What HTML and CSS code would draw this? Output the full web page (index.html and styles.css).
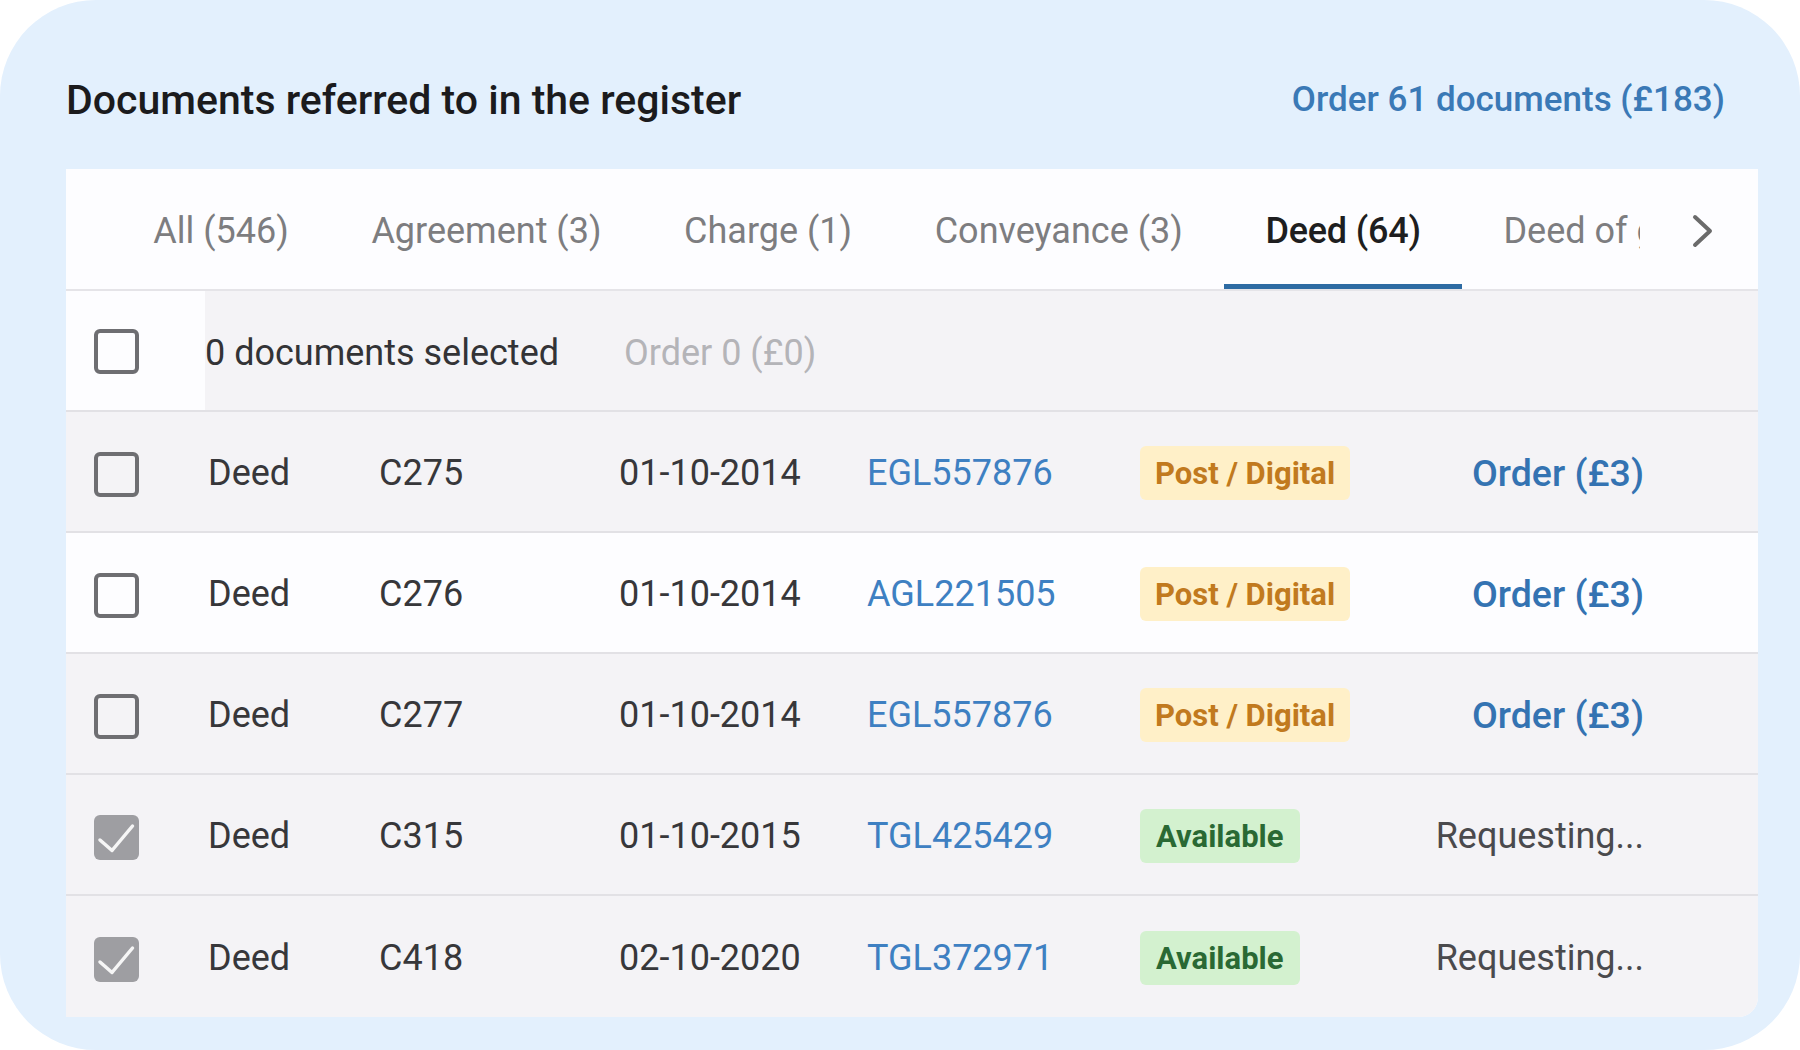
FILE: index.html
```html
<!DOCTYPE html>
<html lang="en">
<head>
  <meta charset="UTF-8" />
  <meta name="viewport" content="width=device-width, initial-scale=1.0"/>
  <title>Documents referred to in the register</title>
  <link rel="stylesheet" href="styles.css">
</head>
<body>

  <div class="panel">
    <div class="panel-header">
      <h1 class="panel-title">Documents referred to in the register</h1>
      <a class="order-all" href="#">Order 61 documents (£183)</a>
    </div>

    <div class="doc-card">
      <div class="tab-bar">
        <div class="tab-scroller">
          <div class="tab">All (546)</div>
          <div class="tab">Agreement (3)</div>
          <div class="tab">Charge (1)</div>
          <div class="tab">Conveyance (3)</div>
          <div class="tab tab-active">Deed (64)</div>
          <div class="tab">Deed of grant (2)</div>
          <div class="tab">Lease (12)</div>
        </div>
        <button class="tab-arrow" aria-label="Next tabs">
          <svg width="26" height="34" viewBox="0 0 26 34">
            <path d="M5 3 L20 17 L5 31" fill="none" stroke="#6b6b6b" stroke-width="4" stroke-linecap="round" stroke-linejoin="round"/>
          </svg>
        </button>
      </div>

      <div class="select-bar">
        <div class="check-cell"><span class="checkbox"></span></div>
        <span class="selected-count">0 documents selected</span>
        <span class="order-selected">Order 0 (£0)</span>
      </div>

      <div class="doc-row row-grey">
        <div class="check-cell"><span class="checkbox"></span></div>
        <span>Deed</span>
        <span>C275</span>
        <span>01-10-2014</span>
        <a class="title-link" href="#">EGL557876</a>
        <span><span class="badge badge-post">Post / Digital</span></span>
        <a class="order-link" href="#">Order (£3)</a>
      </div>

      <div class="doc-row">
        <div class="check-cell"><span class="checkbox"></span></div>
        <span>Deed</span>
        <span>C276</span>
        <span>01-10-2014</span>
        <a class="title-link" href="#">AGL221505</a>
        <span><span class="badge badge-post">Post / Digital</span></span>
        <a class="order-link" href="#">Order (£3)</a>
      </div>

      <div class="doc-row row-grey">
        <div class="check-cell"><span class="checkbox"></span></div>
        <span>Deed</span>
        <span>C277</span>
        <span>01-10-2014</span>
        <a class="title-link" href="#">EGL557876</a>
        <span><span class="badge badge-post">Post / Digital</span></span>
        <a class="order-link" href="#">Order (£3)</a>
      </div>

      <div class="doc-row row-grey">
        <div class="check-cell">
          <span class="checkbox checked">
            <svg width="45" height="45" viewBox="0 0 45 45"><path d="M6 25 L18 35.5 L38.5 11" fill="none" stroke="#fff" stroke-width="3.5" stroke-linecap="round" stroke-linejoin="round" opacity="0.9"/></svg>
          </span>
        </div>
        <span>Deed</span>
        <span>C315</span>
        <span>01-10-2015</span>
        <a class="title-link" href="#">TGL425429</a>
        <span><span class="badge badge-available">Available</span></span>
        <span class="requesting">Requesting...</span>
      </div>

      <div class="doc-row row-grey">
        <div class="check-cell">
          <span class="checkbox checked">
            <svg width="45" height="45" viewBox="0 0 45 45"><path d="M6 25 L18 35.5 L38.5 11" fill="none" stroke="#fff" stroke-width="3.5" stroke-linecap="round" stroke-linejoin="round" opacity="0.9"/></svg>
          </span>
        </div>
        <span>Deed</span>
        <span>C418</span>
        <span>02-10-2020</span>
        <a class="title-link" href="#">TGL372971</a>
        <span><span class="badge badge-available">Available</span></span>
        <span class="requesting">Requesting...</span>
      </div>
    </div>
  </div>

</body>
</html>
```

FILE: styles.css
```css
* {
  margin: 0;
  padding: 0;
  box-sizing: border-box;
  font-family: Roboto, 'Liberation Sans', sans-serif;
}

body {
  background: #ffffff;
  width: 1800px;
  height: 1050px;
  overflow: hidden;
}

a {
  text-decoration: none;
}

.panel {
  width: 1800px;
  height: 1050px;
  background-color: #e3f0fd;
  border-radius: 96px;
  padding: 0 42px 0 66px;
}

.panel-header {
  height: 169px;
  display: flex;
  justify-content: space-between;
  align-items: flex-start;
  padding: 77px 33px 0 0;
}

.panel-title {
  font-size: 41px;
  font-weight: 500;
  line-height: 46px;
  color: #1b1b1d;
}

.order-all {
  font-size: 35px;
  font-weight: 500;
  line-height: 46px;
  color: #3a79b6;
}

.doc-card {
  background-color: #fdfdff;
  border-radius: 0 0 20px 0;
  overflow: hidden;
}

/* tabs */
.tab-bar {
  height: 122px;
  display: flex;
  border-bottom: 2px solid #e5e4e8;
}

.tab-scroller {
  flex: 1;
  display: flex;
  overflow: hidden;
  padding-left: 46px;
}

.tab {
  flex-shrink: 0;
  height: 120px;
  display: flex;
  align-items: center;
  padding: 4px 41.3px 0;
  font-size: 36px;
  color: #7d7d80;
}

.tab-active {
  color: #1e1e20;
  font-weight: 500;
  letter-spacing: -0.2px;
  box-shadow: inset 0 -5px 0 #2d6ba3;
}

.tab-arrow {
  width: 118px;
  border: none;
  background: transparent;
  display: flex;
  align-items: center;
  justify-content: center;
  padding: 4px 0 0 8px;
}

/* selection bar + rows */
.select-bar {
  height: 121px;
  display: flex;
  align-items: center;
  background-color: #f4f3f6;
  border-bottom: 2px solid #e2e1e5;
  font-size: 36px;
}

.check-cell {
  height: 100%;
  display: flex;
  align-items: center;
  padding-left: 28px;
  padding-top: 2px;
}

.select-bar .check-cell {
  width: 139px;
  background-color: #fdfdff;
}

.selected-count {
  color: #333336;
  margin-right: 65px;
  padding-top: 4px;
}

.order-selected {
  color: #b4b4b8;
  padding-top: 4px;
}

.checkbox {
  width: 45px;
  height: 45px;
  border: 4px solid #6e6e72;
  border-radius: 6px;
  display: flex;
  align-items: center;
  justify-content: center;
}

.checkbox.checked {
  border: none;
  background-color: #9e9ea2;
}

.doc-row {
  height: 121px;
  display: grid;
  grid-template-columns: 142px 171px 240px 248px 273px 1fr auto;
  align-items: center;
  padding: 3px 114px 0 0;
  background-color: #fdfdff;
  border-bottom: 2px solid #e2e1e5;
  font-size: 36px;
  color: #37373a;
}

.doc-row:last-child {
  border-bottom: none;
}

.row-grey {
  background-color: #f4f3f6;
}

.title-link {
  color: #3e80c2;
}

.order-link {
  font-size: 37.5px;
  font-weight: 500;
  color: #3473b2;
}

.requesting {
  color: #4a4a4d;
}

.badge {
  display: inline-flex;
  align-items: center;
  height: 54px;
  padding: 0 15px;
  border-radius: 6px;
  font-size: 31px;
  font-weight: 700;
}

.badge-post {
  background-color: #fff0c8;
  color: #c17a1e;
}

.badge-available {
  background-color: #d3f1cf;
  color: #2a6934;
  padding: 0 16px;
}
```
